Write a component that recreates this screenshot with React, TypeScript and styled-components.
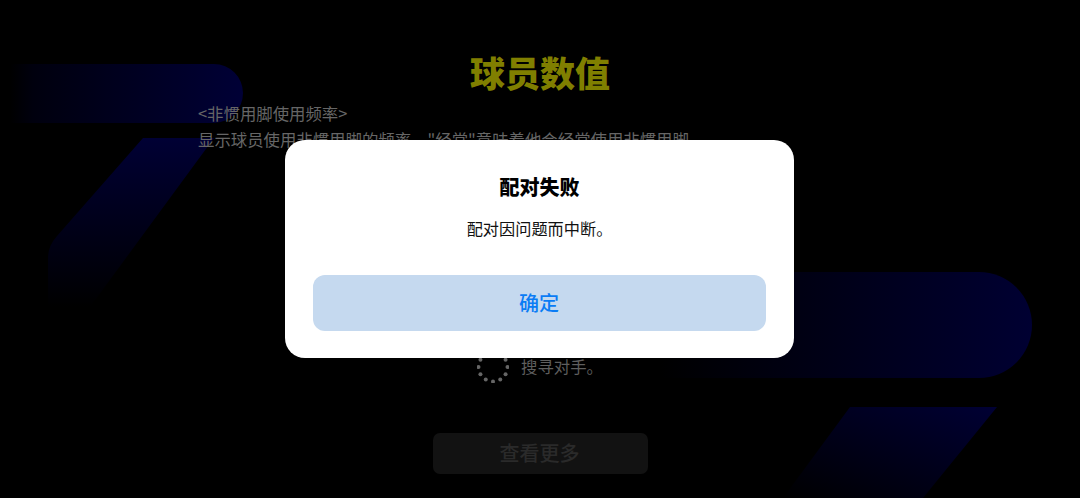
import { createGlobalStyle } from 'styled-components';
import styled from 'styled-components';

const GlobalStyle = createGlobalStyle`
    html, body {
        margin: 0;
        padding: 0;
        background: #000;
    }
`;

const Page = styled.div`
    position: relative;
    width: 1080px;
    height: 498px;
    overflow: hidden;
    background: #000;
    font-family: 'Noto Sans CJK SC', 'Noto Sans', sans-serif;
    display: flex;
    flex-direction: column;
    padding-top: 49px;
    box-sizing: border-box;
`;

const Backdrop = styled.svg`
    position: absolute;
    left: 0;
    top: 0;
`;

const Content = styled.div`
    position: relative;
    display: flex;
    flex-direction: column;
`;

const Title = styled.h1`
    margin: 0;
    text-align: center;
    font-size: 35px;
    line-height: 46px;
    font-weight: 900;
    color: #807f00;
`;

const Description = styled.div`
    margin: 5px 0 0 198px;
    font-size: 16.4px;
    line-height: 26px;
    color: #666;
    white-space: nowrap;
`;

const SearchRow = styled.div`
    margin: 198px 0 0 477px;
    display: flex;
    align-items: center;
    gap: 12px;
    height: 32px;
    font-size: 16.4px;
    color: #5e5e5e;
`;

const Dots = styled.svg`
    flex: none;
    position: relative;
    top: 1px;
`;

const MoreButton = styled.button`
    margin: 51px 0 0 433px;
    width: 215px;
    height: 41px;
    padding: 0 2px 2px 0;
    border: 0;
    border-radius: 7px;
    background: #121212;
    color: #2a2a2a;
    font-family: inherit;
    font-size: 20px;
    font-weight: 500;
`;

const Overlay = styled.div`
    position: absolute;
    inset: 0;
    display: flex;
    justify-content: center;
    align-items: flex-start;
    padding: 140px 1px 0 0;
    box-sizing: border-box;
`;

const Dialog = styled.div`
    width: 509px;
    height: 218px;
    box-sizing: border-box;
    padding: 33px 28px 0;
    background: #fff;
    border-radius: 20px;
    display: flex;
    flex-direction: column;
    align-items: center;
`;

const DialogTitle = styled.div`
    font-size: 20px;
    line-height: 28px;
    font-weight: 900;
    color: #000;
`;

const DialogMessage = styled.div`
    margin-top: 15px;
    font-size: 16.2px;
    line-height: 24px;
    color: #111;
`;

const ConfirmButton = styled.button`
    margin-top: 35px;
    width: 453px;
    height: 56px;
    padding: 0 1px 2px 0;
    border: 0;
    border-radius: 12px;
    background: #c5d9ef;
    color: #0a7cf5;
    font-family: inherit;
    font-size: 20px;
    font-weight: 500;
`;

const dots = [0, 1, 2, 3, 4, 5, 6, 7, 8, 9, 10, 11];

const Spinner = () => (
    <Dots width="32" height="32" viewBox="0 0 32 32">
        {dots.map(i => {
            const a = (i / 12) * Math.PI * 2;
            return (
                <circle
                    key={i}
                    cx={16 + 14.5 * Math.sin(a)}
                    cy={16 - 14.5 * Math.cos(a)}
                    r="2"
                    fill="#666"
                />
            );
        })}
    </Dots>
);

const App = () => (
    <Page>
        <GlobalStyle />
        <Backdrop width="1080" height="498" viewBox="0 0 1080 498">
            <defs>
                <linearGradient id="barLeft" x1="0" x2="1" y1="0" y2="0">
                    <stop offset="0" stopColor="#000" />
                    <stop offset="0.1" stopColor="#00000e" />
                    <stop offset="1" stopColor="#000036" />
                </linearGradient>
                <linearGradient id="slashLeft" x1="0" x2="0" y1="0" y2="1">
                    <stop offset="0" stopColor="#000034" />
                    <stop offset="1" stopColor="#000" />
                </linearGradient>
                <linearGradient id="barRight" x1="0" x2="1" y1="0" y2="0">
                    <stop offset="0" stopColor="#000" />
                    <stop offset="1" stopColor="#000032" />
                </linearGradient>
                <linearGradient id="slashRight" x1="0" x2="1" y1="1" y2="0">
                    <stop offset="0" stopColor="#000" />
                    <stop offset="1" stopColor="#000034" />
                </linearGradient>
            </defs>
            <path d="M10 64H214a29 29 0 0 1 29 29 30 30 0 0 1-29 30H10Z" fill="url(#barLeft)" />
            <path d="M143 138H214L90 307H48V258Q48 246 57 236Z" fill="url(#slashLeft)" />
            <path d="M660 272H979a53 53 0 0 1 0 106H660Z" fill="url(#barRight)" />
            <path d="M850 407H997L923 498H783Z" fill="url(#slashRight)" />
        </Backdrop>
        <Content>
            <Title>球员数值</Title>
            <Description>
                &lt;非惯用脚使用频率&gt;
                <br />
                显示球员使用非惯用脚的频率。"经常"意味着他会经常使用非惯用脚。
            </Description>
            <SearchRow>
                <Spinner />
                <span>搜寻对手。</span>
            </SearchRow>
            <MoreButton>查看更多</MoreButton>
        </Content>
        <Overlay>
            <Dialog>
                <DialogTitle>配对失败</DialogTitle>
                <DialogMessage>配对因问题而中断。</DialogMessage>
                <ConfirmButton>确定</ConfirmButton>
            </Dialog>
        </Overlay>
    </Page>
);

export default App;
